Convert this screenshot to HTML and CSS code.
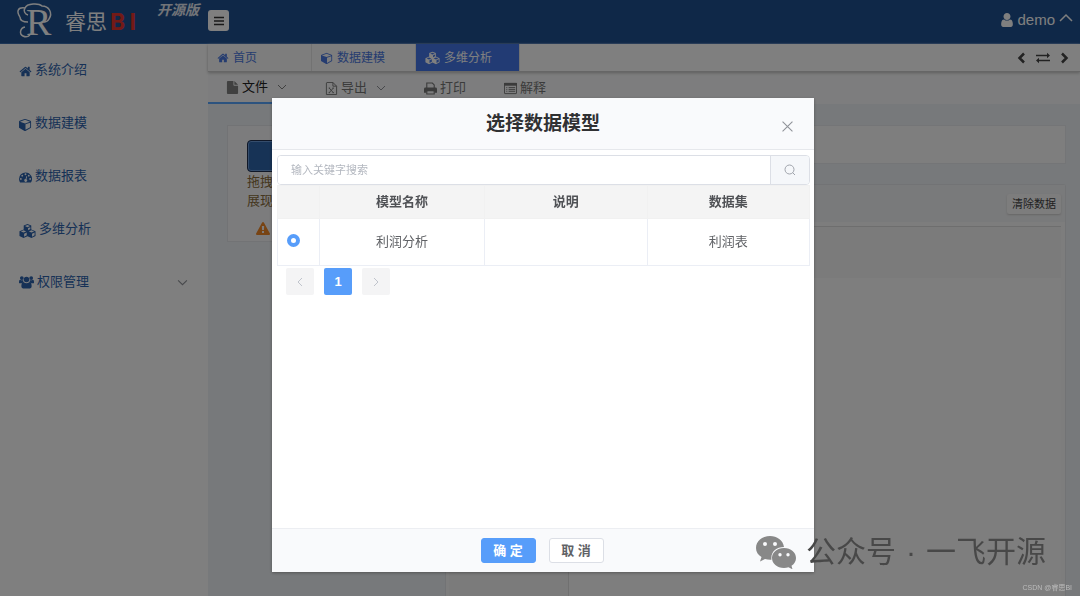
FILE: index.html
```html
<!DOCTYPE html>
<html lang="zh-CN">
<head>
<meta charset="utf-8">
<title>睿思BI</title>
<link rel="stylesheet" href="styles.css">
</head>
<body>
<svg class="defs" aria-hidden="true">
  <symbol id="home" viewBox="0 0 1792 1792"><path d="M1472 992v480q0 26-19 45t-45 19h-384v-384h-256v384h-384q-26 0-45-19t-19-45v-480q0-1 .5-3t.5-3l575-474 575 474q1 2 1 6zm223-69l-62 74q-8 9-21 11h-3q-13 0-21-7l-692-577-692 577q-12 8-24 7-13-2-21-11l-62-74q-8-10-7-23.5t11-21.5l719-599q32-26 76-26t76 26l244 204v-195q0-14 9-23t23-9h192q14 0 23 9t9 23v408l219 182q10 8 11 21.5t-7 23.5z"/></symbol>
  <symbol id="cube" viewBox="0 0 1792 1792"><path d="M896 1629l640-349v-636l-640 233v752zm-64-865l698-254-698-254-698 254zm832-252v768q0 35-18 65t-49 47l-704 384q-28 16-61 16t-61-16l-704-384q-31-17-49-47t-18-65v-768q0-40 23-73t61-47l704-256q22-8 44-8t44 8l704 256q38 14 61 47t23 73z"/></symbol>
  <symbol id="dash" viewBox="0 0 14 14"><path fill-rule="evenodd" d="M7 1.5a7 7 0 0 0-7 7c0 1.4.4 2.7 1.1 3.8.1.2.2.2.4.2h11c.2 0 .3 0 .4-.2A7 7 0 0 0 7 1.500zM2 7.500a1 1 0 1 1 0 2 1 1 0 0 1 0-2zM3.500 4a1 1 0 1 1 0 2 1 1 0 0 1 0-2zM7 2.500a1 1 0 1 1 0 2 1 1 0 0 1 0-2zM10.500 4a1 1 0 1 1 0 2 1 1 0 0 1 0-2zM12 7.500a1 1 0 1 1 0 2 1 1 0 0 1 0-2zM8 5.500l.8.3-.8 3a1.500 1.500 0 1 1-.9-.2z"/></symbol>
  <symbol id="cubes" viewBox="0 0 18 16"><path fill-rule="evenodd" d="M9 .5l4 1.600v4.200l4.500 1.900v5l-4.300 2.300L9 13.500l-4.200 2L.5 13.200v-5L5 6.300V2.100zM9 1.700L6.300 2.800 9 3.900l2.700-1.100zM9.600 7.100L12 6V3.900L9.600 4.900zM4.800 7.300L2 8.500l2.800 1.200 2.800-1.200zM5.400 14l2.800-1.400V9.600L5.400 10.800zM13.200 7.300l-2.800 1.200 2.800 1.200L16 8.500zM13.800 14l2.700-1.400V9.600l-2.700 1.200z"/></symbol>
  <symbol id="users" viewBox="0 0 16 14"><circle cx="3" cy="2.800" r="2"/><circle cx="13" cy="2.800" r="2"/><circle cx="8" cy="4.300" r="2.900"/><path d="M0 8V6.600Q0 4.500 1.200 4.500q1.600 1 3.200.5Q4.400 6.500 5 7.200 3.700 7.200 2.900 8.300H1Q0 8.300 0 8zM16 8V6.600q0-2.100-1.200-2.100-1.600 1-3.200.5 0 1.500-.6 2.200 1.300 0 2.100 1.100H15q1 0 1-.3zM5 7.300q3 2 6 0 2.500 0 2.500 4.300 0 2.200-1.800 2.200H4.300q-1.800 0-1.800-2.200Q2.500 7.300 5 7.300z"/></symbol>
  <symbol id="user" viewBox="256 128 1280 1536"><path d="M1536 1399q0 109-62.500 187t-150.500 78h-854q-88 0-150.500-78t-62.500-187q0-85 8.500-160.500t31.500-152 58.500-131 94-89 134.500-34.500q131 128 313 128t313-128q76 0 134.500 34.500t94 89 58.500 131 31.500 152 8.500 160.500zm-256-887q0 159-112.500 271.500t-271.500 112.500-271.500-112.500-112.500-271.500 112.500-271.500 271.500-112.500 271.500 112.500 112.500 271.500z"/></symbol>
  <symbol id="file" viewBox="0 0 12 14"><path d="M1 0h6v4.200q0 .8.8.8H12v8q0 1-1 1H1q-1 0-1-1V1q0-1 1-1zM8 0l4 4H8z"/></symbol>
  <symbol id="excel" viewBox="0 0 12 14"><path fill="none" stroke="currentColor" d="M1 .5h6.500l4 4v9H.5V1zM7.500.5v4h4M3.500 6.500l4.500 5M8 6.500l-4.500 5M3 6.500h1.500M7 6.500h1.500M3 11.500h1.500M7 11.500h1.500"/></symbol>
  <symbol id="print" viewBox="0 0 14 13"><path fill="none" stroke="currentColor" stroke-width="1.200" d="M3 6V.6h6l2 2V6M3 8.800h8v3.600H3z"/><path d="M1.500 5.500h11Q14 5.500 14 7v4h-2.500V9.800h-1V8h-7v1.800h-1V11H0V7q0-1.500 1.500-1.500z"/></symbol>
  <symbol id="list" viewBox="0 0 14 12"><path fill="none" stroke="currentColor" d="M1 .5h12q.5 0 .5.5v10q0 .5-.5.500H1q-.5 0-.5-.5V1Q.5.5 1 .5zM2.500 5h1M5 5h7M2.500 7h1M5 7h7M2.500 9h1M5 9h7"/><path d="M0 0h14v3H0z"/></symbol>
  <symbol id="warn" viewBox="0 0 1792 1792"><path d="M1024 1375v-190q0-14-9.500-23.500t-22.500-9.500h-192q-13 0-22.500 9.500t-9.500 23.500v190q0 14 9.500 23.500t22.500 9.500h192q13 0 22.500-9.500t9.500-23.500zm-2-374l18-459q0-12-10-19-13-11-24-11h-220q-11 0-24 11-10 7-10 21l17 457q0 10 10 16.500t24 6.500h185q14 0 23.500-6.500t10.500-16.500zm-14-934l768 1408q35 63-2 126-17 29-46.500 46t-63.500 17h-1536q-34 0-63.500-17t-46.500-46q-37-63-2-126l768-1408q17-31 47-49t65-18 65 18 47 49z"/></symbol>
  <symbol id="down" viewBox="0 0 10 10"><path fill="none" stroke="currentColor" d="M1 3l4 4 4-4"/></symbol>
  <symbol id="left" viewBox="0 0 10 10"><path fill="none" stroke="currentColor" d="M7 1L3 5l4 4"/></symbol>
  <symbol id="right" viewBox="0 0 10 10"><path fill="none" stroke="currentColor" d="M3 1l4 4-4 4"/></symbol>
</svg>

<div class="app">
  <header class="header">
    <div class="brand">
      <svg class="logo" viewBox="0 0 38 43" role="img" aria-label="R">
        <text class="logo-letter" x="10" y="35">R</text>
        <path class="logo-line" d="M4 17C0 11 2 7 9 8 11 3 23 3 26 6c7 0 11 7 7 13-1 2-3 3-5 3M4 17c0 4 3 5 8 5M9 8c-2 3 0 6 3 7M9 27c-5 1-6 7-2 9 2 1 5 1 7-1"/>
      </svg>
      <span class="brand-name">睿思</span><b class="brand-bi"><span>B</span><span>I</span></b>
      <i class="edition">开源版</i>
    </div>
    <button class="menu-toggle" aria-label="菜单"><svg viewBox="0 0 10 10"><path stroke="currentColor" stroke-width="1.300" d="M0 1.500h10M0 5h10M0 8.500h10"/></svg></button>
    <button class="account"><svg class="user-icon"><use href="#user"/></svg>demo<svg class="caret" viewBox="0 0 14 10"><path fill="none" stroke="currentColor" stroke-width="1.500" d="M1 8l6-6 6 6"/></svg></button>
  </header>
  <div class="body">
    <nav class="sidebar">
      <a href="#"><svg><use href="#home"/></svg>系统介绍</a>
      <a href="#"><svg><use href="#cube"/></svg>数据建模</a>
      <a href="#"><svg><use href="#dash"/></svg>数据报表</a>
      <a href="#"><svg class="wide"><use href="#cubes"/></svg>多维分析</a>
      <a href="#"><svg class="mid"><use href="#users"/></svg>权限管理<svg class="arrow"><use href="#down"/></svg></a>
    </nav>
    <main class="main">
      <div class="tabs">
        <a href="#" class="tab"><svg><use href="#home"/></svg>首页</a>
        <a href="#" class="tab"><svg><use href="#cube"/></svg>数据建模</a>
        <a href="#" class="tab active"><svg class="wide"><use href="#cubes"/></svg>多维分析</a>
        <div class="tab-tools">
          <button aria-label="向左"><svg viewBox="0 0 10 12"><path fill="none" stroke="currentColor" stroke-width="2.500" d="M8 1.500L3.500 6 8 10.500"/></svg></button>
          <button aria-label="切换"><svg class="swap" viewBox="0 0 14 12"><path fill="none" stroke="currentColor" stroke-width="1.500" d="M0 3.500h12M2 8.500h12"/><path d="M11 .8l3 2.700-3 2.700zM3 5.800L0 8.500l3 2.700z"/></svg></button>
          <button aria-label="向右"><svg viewBox="0 0 10 12"><path fill="none" stroke="currentColor" stroke-width="2.500" d="M2 1.500L6.500 6 2 10.500"/></svg></button>
        </div>
      </div>
      <div class="toolbar">
        <button class="tool current"><svg><use href="#file"/></svg>文件<svg class="drop"><use href="#down"/></svg></button>
        <button class="tool"><svg><use href="#excel"/></svg>导出<svg class="drop"><use href="#down"/></svg></button>
        <button class="tool"><svg><use href="#print"/></svg>打印</button>
        <button class="tool"><svg><use href="#list"/></svg>解释</button>
      </div>
      <div class="workspace">
        <aside class="card">
          <button class="choose" aria-label="选择"></button>
          <p>拖拽<br>展现</p>
          <svg class="warn"><use href="#warn"/></svg>
        </aside>
        <section class="content">
          <div class="filter"></div>
          <div class="panel">
            <div class="panel-head"><button>清除数据</button></div>
            <div class="grid"><div class="grid-head"></div><div class="grid-side"></div><div class="grid-body"></div></div>
          </div>
        </section>
      </div>
    </main>
  </div>
</div>

<div class="overlay">
  <div class="dialog" role="dialog" aria-modal="true" aria-labelledby="dialog-title">
    <div class="dialog-head">
      <h2 id="dialog-title">选择数据模型</h2>
      <button class="close" aria-label="关闭"><svg viewBox="0 0 10 10"><path stroke="currentColor" d="M.5.5l9 9M9.500.5l-9 9"/></svg></button>
    </div>
    <div class="dialog-body">
      <div class="search">
        <input type="text" aria-label="搜索" placeholder="输入关键字搜索">
        <button aria-label="搜索"><svg viewBox="0 0 12 12"><circle cx="5.500" cy="5.500" r="4.500" fill="none" stroke="currentColor"/><path stroke="currentColor" d="M8.500 8.500l2.500 2.500"/></svg></button>
      </div>
      <table>
        <colgroup><col class="c-pick"><col class="c-name"><col class="c-data"><col class="c-data"></colgroup>
        <thead><tr><th></th><th>模型名称</th><th>说明</th><th>数据集</th></tr></thead>
        <tbody><tr><td class="pick"><input type="radio" name="model" aria-label="利润分析" checked></td><td>利润分析</td><td></td><td>利润表</td></tr></tbody>
      </table>
      <div class="pager">
        <button aria-label="上一页"><svg><use href="#left"/></svg></button>
        <button class="page">1</button>
        <button aria-label="下一页"><svg><use href="#right"/></svg></button>
      </div>
    </div>
    <div class="dialog-foot">
      <button class="ok">确 定</button>
      <button>取 消</button>
    </div>
  </div>
</div>

<div class="watermark">
  <svg viewBox="0 0 40 33"><path fill-rule="evenodd" d="M14 0C6 0 0 5 0 12c0 4 2 7 5.500 9L4 25.500l5-2.500c2 .6 4 1 6.500.8C14.500 16 20 11 28 11 27 4 21 0 14 0zM9 6a2 2 0 1 1 0 4 2 2 0 0 1 0-4zM19 6a2 2 0 1 1 0 4 2 2 0 0 1 0-4zM28 12c-7 0-12 4.500-12 10s5 10 12 10c1.500 0 3-.2 4.500-.7l4 2-1-3.500C38.500 28 40 25 40 22c0-5.500-5-10-12-10zM24 17a1.700 1.700 0 1 1 0 3.400 1.700 1.700 0 0 1 0-3.400zM32 17a1.700 1.700 0 1 1 0 3.400 1.700 1.700 0 0 1 0-3.400z"/></svg>
  <span>公众号</span><span>·</span><span>一飞开源</span>
</div>
<div class="credit">CSDN @睿思BI</div>
</body>
</html>
```
FILE: styles.css
```css
* { box-sizing: border-box; }
body {
  margin: 0;
  font: 13px/20px "Liberation Sans", "Noto Sans CJK SC", sans-serif;
  color: #606266;
  overflow: hidden;
}
button, input { font: inherit; color: inherit; margin: 0; }
button { border: 0; background: none; padding: 0; }
a { color: inherit; text-decoration: none; }
svg { fill: currentColor; flex: none; }
.defs { position: absolute; width: 0; height: 0; }

.app { display: flex; flex-direction: column; height: 100vh; }
.header {
  display: flex;
  align-items: center;
  height: 44px;
  background: #1e5090;
  color: #fff;
  border-bottom: 1px solid #3a6cac;
}
.brand { display: flex; align-items: center; width: 208px; height: 100%; padding-left: 16px; }
.logo { width: 38px; height: 43px; overflow: visible; }
.logo-letter { font: 38px "Liberation Serif", serif; }
.logo-line { fill: none; stroke: #fff; stroke-width: 1.5; }
.brand-name { margin-left: 11px; font-size: 21px; }
.brand-bi { display: flex; gap: 4px; margin-left: 3px; font-family: Roboto, sans-serif; font-size: 24px; color: #e8342c; }
.edition { align-self: flex-start; margin-left: auto; padding-right: 9px; font-size: 14px; font-weight: bold; color: #e4e8f0; }
.menu-toggle { display: grid; place-items: center; width: 21px; height: 21px; margin-bottom: 2px; background: #fff; border-radius: 3px; color: #333; }
.menu-toggle svg { width: 10px; height: 10px; }
.account { display: flex; align-items: center; gap: 4px; margin: 0 7px 4px auto; font-size: 15px; }
.user-icon { width: 12px; height: 14px; }
.caret { width: 14px; height: 10px; margin-bottom: 4px; }

.body { flex: 1; display: flex; min-height: 0; }
.sidebar { width: 208px; background: #fff; padding-top: 16px; color: #2c62ac; display: flex; flex-direction: column; gap: 33px; }
.sidebar a { display: flex; align-items: center; gap: 3px; padding: 0 20px 0 19px; }
.sidebar svg { width: 13px; height: 13px; margin-top: 3px; }
.sidebar .wide { width: 17px; height: 16px; }
.sidebar .mid { width: 15px; height: 14px; margin-top: 0; }
.sidebar .arrow { width: 11px; height: 11px; margin: 0 0 0 auto; color: #909399; }

.main { flex: 1; min-width: 0; display: flex; flex-direction: column; background: #eff3f6; }
.tabs { display: flex; height: 28px; background: #fff; border-bottom: 1px solid #ccc; box-shadow: 0 1px 3px #bbb; z-index: 1; }
.tab { display: flex; align-items: center; gap: 4px; width: 104px; padding-left: 9px; background: #fafafa; border-right: 1px solid #e4e4e4; font-size: 12px; color: #4a78e0; }
.tab svg { width: 12px; height: 12px; }
.tab .wide { width: 15px; height: 14px; }
.tab.active { background: #4477e8; color: #fff; }
.tab-tools { display: flex; align-items: center; gap: 10px; margin-left: auto; padding-right: 10px; color: #444; }
.tab-tools button { display: flex; }
.tab-tools svg { width: 10px; height: 12px; }
.tab-tools .swap { width: 14px; height: 12px; }

.toolbar { display: flex; gap: 2px; height: 32px; background: #fafbfc; }
.tool { display: flex; align-items: center; gap: 3px; padding: 0 18px; color: #777; }
.tool svg { width: 13px; height: 13px; }
.tool .drop { width: 10px; height: 10px; margin-left: 6px; color: #909399; }
.tool.current { color: #222; border-bottom: 2px solid #58a6ff; }
.tool.current svg { color: #808080; }

.workspace { flex: 1; display: flex; align-items: flex-start; gap: 16px; padding: 21px 14px 0 19px; min-height: 0; }
.card { width: 202px; padding: 14px 19px 5px; background: #f8f9fb; border: 1px solid #e4e6ea; }
.choose { display: block; width: 100%; height: 32px; background: #2f66ac; border: 1px solid #203050; border-radius: 4px; box-shadow: inset 0 0 0 1px #6a9ad8; }
.card p { margin: 0; line-height: 19px; color: #8a6d3b; }
.warn { display: block; width: 14px; height: 14px; margin: 12px 0 0 9px; color: #f08828; }
.content { flex: 1; align-self: stretch; display: flex; flex-direction: column; gap: 20px; min-width: 0; }
.filter { height: 39px; background: #fcfdfc; border: 1px solid #e8eaee; }
.panel { flex: 1; display: flex; flex-direction: column; background: #fbfbfb; border: 1px solid #e4e6ea; border-bottom: 0; border-radius: 3px 3px 0 0; }
.panel-head { display: flex; justify-content: flex-end; align-items: center; height: 37px; padding-right: 4px; background: #f3f4f6; }
.panel-head button { height: 20px; padding: 0 5px; background: #fafafa; border-radius: 2px; box-shadow: 0 1px 2px #ccc; font-size: 11px; color: #444; }
.grid { flex: 1; display: grid; grid-template: 51px 1fr / 120px 1fr; margin: 4px 4px 0 3px; border-top: 1px solid #ddd; }
.grid-head { grid-column: 1 / 3; background: #f6f6f6; }
.grid-side { background: #f6f6f6; border-right: 1px solid #e0e0e0; }
.grid-body { background: #fdfdfd; }

.overlay { position: fixed; inset: 0; padding: 98px 25% 24px; background: rgba(0, 0, 0, .5); display: flex; z-index: 10; }
.dialog { flex: 1; margin: 0 -4px 0 2px; display: flex; flex-direction: column; background: #fff; box-shadow: 0 1px 3px rgba(0, 0, 0, .3); }
.dialog-head { position: relative; display: flex; align-items: center; justify-content: center; height: 52px; background: #f9fafc; border-bottom: 1px solid #e6e8ec; }
.dialog-head h2 { margin: 0; font-size: 19px; color: #303133; }
.close { position: absolute; right: 21px; top: 23px; display: flex; color: #909399; }
.close svg { width: 11px; height: 11px; }
.dialog-body { flex: 1; padding: 5px 4px 5px 5px; }
.search { display: flex; height: 30px; border: 1px solid #dcdfe6; border-radius: 4px; overflow: hidden; }
.search input { flex: 1; min-width: 0; padding: 0 13px; border: 0; font-size: 11px; }
.search input::placeholder { color: #b4b8c0; }
.search button { display: grid; place-items: center; width: 39px; background: #f5f7fa; border-left: 1px solid #dcdfe6; color: #a0a4ac; }
.search svg { width: 12px; height: 12px; }
table { width: 100%; table-layout: fixed; border-collapse: collapse; text-align: center; }
.c-pick { width: 42px; }
.c-name { width: 165px; }
th, td { padding: 0; border: 1px solid #ebeef5; }
th { height: 33px; background: #f4f4f4; border-color: #f1f1f1; color: #505256; }
td { height: 47px; }
td input { appearance: none; display: block; width: 13px; height: 13px; margin: -4px 0 0 9px; border: 4px solid #579dfa; border-radius: 50%; background: #fff; }
.pager { display: flex; gap: 10px; padding: 2px 9px; }
.pager button { display: grid; place-items: center; width: 28px; height: 27px; background: #f4f4f5; border-radius: 2px; color: #c0c4cc; }
.pager svg { width: 10px; height: 10px; }
.pager .page { background: #579dfa; color: #fff; font-weight: bold; }
.dialog-foot { display: flex; align-items: center; justify-content: center; gap: 13px; height: 44px; padding-right: 2px; background: #f9fafc; border-top: 1px solid #eceef2; }
.dialog-foot button { width: 55px; height: 25px; border: 1px solid #dcdfe6; border-radius: 3px; background: #fff; font-weight: bold; line-height: 20px; }
.dialog-foot .ok { background: #579dfa; border-color: #579dfa; color: #fff; }

.watermark { position: fixed; right: 34px; bottom: 24px; z-index: 20; display: flex; align-items: center; gap: 10px; font-size: 30px; line-height: 40px; color: #484848; }
.watermark svg { width: 40px; height: 33px; color: #888; }
.credit { position: fixed; right: 8px; bottom: 3px; z-index: 20; font-size: 7px; line-height: 10px; color: #bbb; }
```
